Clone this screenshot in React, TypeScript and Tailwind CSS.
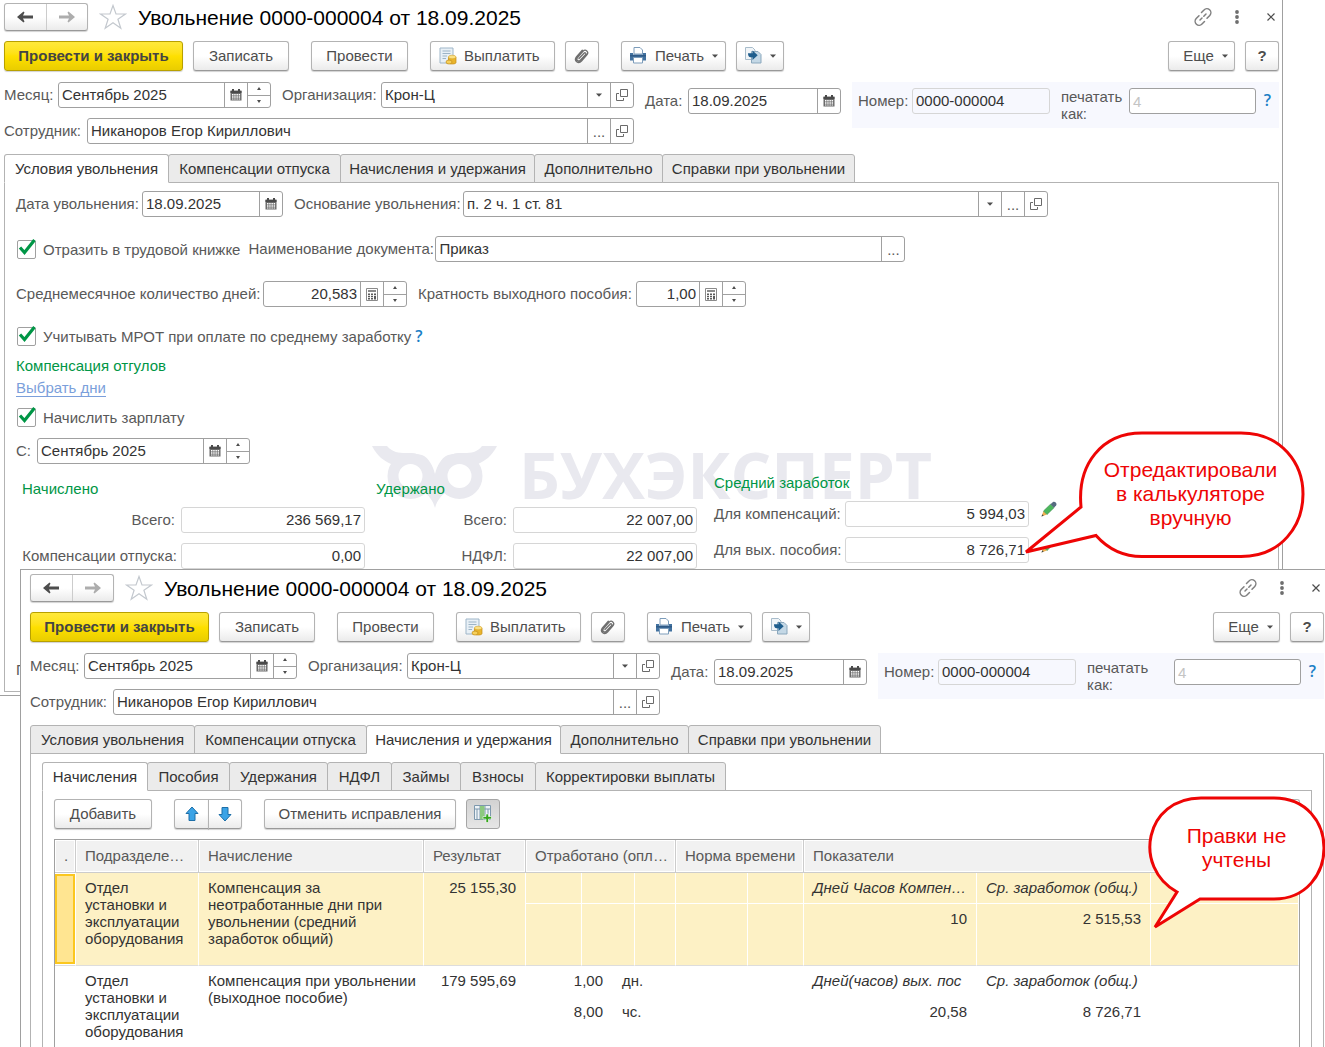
import React, { useId } from "react";
import clsx from "clsx";

type Tab = { title: string; width: string };

const MAIN_TABS: Tab[] = [
  { title: "Условия увольнения", width: "w-[165px]" },
  { title: "Компенсации отпуска", width: "w-[173px]" },
  { title: "Начисления и удержания", width: "w-[195px]" },
  { title: "Дополнительно", width: "w-[129px]" },
  { title: "Справки при увольнении", width: "w-[193px]" },
];

const INNER_TABS: Tab[] = [
  { title: "Начисления", width: "w-[106px]" },
  { title: "Пособия", width: "w-[83px]" },
  { title: "Удержания", width: "w-[99px]" },
  { title: "НДФЛ", width: "w-[65px]" },
  { title: "Займы", width: "w-[70px]" },
  { title: "Взносы", width: "w-[76px]" },
  { title: "Корректировки выплаты", width: "w-[191px]" },
];

/* ---------- icons ---------- */

const ArrowIcon = ({ className }: { className?: string }) => (
  <svg width="18" height="12" viewBox="0 0 18 12" className={className}>
    <path d="M1 6 7.5 .5 8.500 1.500 7 4.500H17V7.500H7L8.500 10.500 7.500 11.500Z" fill="currentColor" />
  </svg>
);

const StarIcon = () => (
  <svg width="28" height="26" viewBox="0 0 28 26" fill="none">
    <path
      d="M14 1.5 17 10H26.5L18.9 15.3 21.8 24.3 14 18.8 6.2 24.3 9.1 15.3 1.5 10H11Z"
      stroke="#c3c8ce"
      strokeWidth="1.2"
    />
  </svg>
);

const LinkIcon = () => (
  <svg width="20" height="20" viewBox="0 0 20 20" fill="none" stroke="#808080" strokeWidth="1.5" strokeLinecap="round">
    <path d="M8.5 5.5 11 3a3.9 3.9 0 0 1 5.8 5.4L14 11.3M11.5 14.5 9 17a3.9 3.9 0 0 1-5.8-5.4L6 8.7" />
    <path d="M7 13 9 11M10.8 9.2 13 7" />
  </svg>
);

const DotsIcon = () => (
  <svg width="6" height="14" viewBox="0 0 6 14" fill="#6e6e6e">
    <circle cx="3" cy="2" r="1.9" />
    <circle cx="3" cy="7" r="1.9" />
    <circle cx="3" cy="12" r="1.9" />
  </svg>
);

const CloseIcon = () => (
  <svg width="8" height="8" viewBox="0 0 8 8" stroke="#4d4d4d" strokeWidth="1.2">
    <path d="M.5 .5 7.5 7.5M7.5 .5 .5 7.5" />
  </svg>
);

const CalendarIcon = () => (
  <svg width="12" height="12" viewBox="0 0 12 12">
    <path d="M.5 1.500H11.500V11.500H.5Z" fill="#6a6a6a" />
    <path d="M2 0H4V3H2ZM8 0H10V3H8Z" fill="#4a4a4a" />
    <path d="M.5 2H11.500V4H.5Z" fill="#4a4a4a" />
    <path
      d="M2 5H3.500V6.500H2ZM4.200 5H5.700V6.500H4.200ZM6.400 5H7.900V6.500H6.400ZM8.600 5H10.100V6.500H8.600ZM2 7.200H3.500V8.700H2ZM4.200 7.200H5.700V8.700H4.200ZM6.400 7.200H7.900V8.700H6.400ZM8.600 7.200H10.100V8.700H8.600ZM2 9.400H3.500V10.600H2ZM4.200 9.400H5.700V10.600H4.200ZM6.400 9.400H7.900V10.600H6.400ZM8.600 9.400H10.100V10.600H8.600Z"
      fill="#fff"
    />
  </svg>
);

const CalcIcon = () => (
  <svg width="12" height="13" viewBox="0 0 12 13">
    <path d="M.5 .5H11.5V12.5H.5Z" fill="#fff" stroke="#8a8a8a" />
    <path d="M2 2H10V4H2Z" fill="#8a8a8a" />
    <path
      d="M2 5.5H4V7H2ZM5 5.5H7V7H5ZM8 5.5H10V7H8ZM2 7.8H4V9.2H2ZM5 7.8H7V9.2H5ZM2 10H4V11.5H2ZM5 10H7V11.5H5ZM8 7.8H10V11.5H8Z"
      fill="#5a5a5a"
    />
  </svg>
);

const OpenIcon = () => (
  <svg width="12" height="12" viewBox="0 0 12 12" fill="none" stroke="#6a6a6a">
    <path d="M4.5 .5H11.5V7.5H4.5Z" />
    <path d="M3 4.5H.5V11.5H7.5V9" />
  </svg>
);

const CaretIcon = () => (
  <svg width="6" height="4" viewBox="0 0 6 4" fill="#4d4d4d">
    <path d="M0 .5H6L3 3.8Z" />
  </svg>
);

const PayIcon = () => (
  <svg width="18" height="18" viewBox="0 0 18 18">
    <path d="M1 1H14V16H1Z" fill="#e8f0f6" stroke="#9fb6c9" />
    <path d="M3.5 4H11.5M3.5 6.5H11.5M3.5 9H8M3.5 11.500H7" stroke="#9db4c6" />
    <path d="M9.500 10V15.500C9.500 17.500 17 17.500 17 15.500V10Z" fill="#e9b42c" stroke="#c18a14" strokeWidth=".7" />
    <ellipse cx="13.200" cy="10" rx="3.800" ry="1.800" fill="#fbe083" stroke="#d6a42a" strokeWidth=".6" />
    <ellipse cx="10" cy="15" rx="3" ry="2" fill="#f6d05a" stroke="#c18a14" strokeWidth=".7" />
  </svg>
);

const ClipIcon = () => (
  <svg width="16" height="16" viewBox="0 0 16 16" fill="none" stroke="#6f6f6f" strokeWidth="1.3" strokeLinecap="round">
    <path d="M5 10.500 10 5.300c1.200-1.200 2.600.2 1.500 1.400L6.300 12.200c-2 2-4.700-.4-2.800-2.700L9 3.300c2.600-2.800 6.300.6 3.900 3.500L7.500 13C4.300 16.500-.4 12.600 2.400 9L8.300 2.300" />
  </svg>
);

const PrintIcon = () => (
  <svg width="18" height="17" viewBox="0 0 18 17">
    <path d="M5 .5H11L13.500 3V7H5Z" fill="#fff" stroke="#7c9cba" />
    <path d="M1 6H4V7.500H14V6H17V13.500H1Z" fill="#41719f" />
    <path d="M1 8H17V9.500H1Z" fill="#2f5a86" />
    <path d="M4.500 10.500H13.500V16H4.500Z" fill="#fff" stroke="#7c9cba" />
  </svg>
);

const CreateFromIcon = () => (
  <svg width="17" height="17" viewBox="0 0 17 17">
    <path d="M.5 .5H7.500L10 3V12.500H.5Z" fill="#f1f5f8" stroke="#a8bccb" />
    <path d="M6.500 4.500H13L16 7.500V16H6.500Z" fill="#c4d8e6" stroke="#8ba8bd" />
    <path d="M3 6.200H7.500V3.500L12.700 8.200 7.500 12.900V10.200H5.500C4 10.200 3 8.800 3 6.200Z" fill="#1f5e8d" />
  </svg>
);

const MoveIcon = ({ className }: { className?: string }) => (
  <svg width="14" height="16" viewBox="0 0 14 16" className={className}>
    <path d="M7 1 13 7.500H10V14.500H4V7.500H1Z" fill="#3ba3e6" stroke="#1d6fa8" strokeLinejoin="round" />
  </svg>
);

const ColumnsIcon = () => (
  <svg width="19" height="18" viewBox="0 0 19 18">
    <path d="M.5 .5H16.500V14.500H.5Z" fill="#eef3f7" stroke="#7d98ad" />
    <path d="M1 4H16M6 1V14M11 1V14M14 4V14M3 4V14" stroke="#7d98ad" />
    <path d="M6 1H10.500V14.500H6Z" fill="#8cc97f" />
    <path d="M12 9H14.500V11.500H17.500V14H14.500V17.500H12V14H9V11.500H12Z" fill="#35a51c" stroke="#fff" strokeWidth=".6" />
  </svg>
);

const PencilIcon = () => (
  <svg width="16" height="16" viewBox="0 0 16 16">
    <path d="M.5 15.500 2.500 10 6 13.500Z" fill="#f0b050" />
    <path d="M.5 15.500 1.300 13.300 2.700 14.700Z" fill="#3d4a4a" />
    <path d="M2.500 10 9.500 3.200 13 6.700 6 13.500Z" fill="#4cb85c" stroke="#35894a" strokeWidth=".6" />
    <path d="M9.500 3.200 12 1c1.500-1.200 4.400 1 3.200 3.200L13 6.700Z" fill="#566b80" />
  </svg>
);

/* ---------- controls ---------- */

type ButtonProps = {
  children?: React.ReactNode;
  className?: string;
  label?: string;
  primary?: boolean;
};

const Button = ({ children, className, label, primary }: ButtonProps) => (
  <button
    type="button"
    aria-label={label}
    className={clsx(
      "flex h-[30px] shrink-0 items-center rounded-[3px] border pb-px whitespace-nowrap shadow-[0_1px_1px_#0000002e]",
      primary
        ? "border-[#b8a000] bg-linear-to-b from-[#ffe93a] via-[#fee000] to-[#e9cd00] font-bold text-[#444]"
        : "border-[#b3b3b3] border-b-[#999] bg-linear-to-b from-white from-50% to-[#ebebeb] text-[#4d4d4d]",
      className
    )}
  >
    {children}
  </button>
);

const HelpLink = ({ className }: { className?: string }) => (
  <a href="#help" className={clsx("font-['Open_Sans',sans-serif] text-[16px] font-semibold text-[#1b7fc6]", className)}>
    ?
  </a>
);

type Addon = "calendar" | "calc" | "spin" | "drop" | "more" | "open";

const AddonButton = ({ kind }: { kind: Addon }) => {
  if (kind === "spin") {
    return (
      <div className="flex w-[23px] shrink-0 flex-col border-l border-[#a0a0a0]">
        <button type="button" aria-label="Больше" className="flex flex-1 items-center justify-center border-b border-[#a0a0a0]">
          <svg width="4" height="3" viewBox="0 0 4 3" fill="#4d4d4d">
            <path d="M0 3 2 0 4 3Z" />
          </svg>
        </button>
        <button type="button" aria-label="Меньше" className="flex flex-1 items-center justify-center">
          <svg width="4" height="3" viewBox="0 0 4 3" fill="#4d4d4d">
            <path d="M0 0 2 3 4 0Z" />
          </svg>
        </button>
      </div>
    );
  }

  return (
    <button type="button" aria-label={kind} className="flex w-[23px] shrink-0 items-center justify-center border-l border-[#a0a0a0]">
      {kind === "calendar" && <CalendarIcon />}
      {kind === "calc" && <CalcIcon />}
      {kind === "drop" && <CaretIcon />}
      {kind === "open" && <OpenIcon />}
      {kind === "more" && "..."}
    </button>
  );
};

type FieldProps = {
  label: string;
  value?: string;
  labelClass?: string;
  boxClass: string;
  addons?: Addon[];
  right?: boolean;
  readOnly?: boolean;
};

const Field = ({ label, value, labelClass, boxClass, addons = [], right, readOnly }: FieldProps) => {
  const id = useId();
  return (
    <div className="flex items-center">
      <label htmlFor={id} className={clsx("shrink-0 pb-px whitespace-nowrap", labelClass)}>
        {label}
      </label>
      <div
        className={clsx(
          "flex h-[26px] shrink-0 overflow-hidden rounded-[3px] border",
          readOnly ? "border-[#d6d6d6]" : "border-[#a0a0a0] bg-white",
          boxClass
        )}
      >
        <input
          id={id}
          defaultValue={value}
          readOnly={readOnly}
          className={clsx("w-0 flex-1 bg-transparent px-[3px] pb-px text-[#333] outline-none", right && "text-right")}
        />
        {addons.map((kind) => (
          <AddonButton kind={kind} key={kind} />
        ))}
      </div>
    </div>
  );
};

const Check = ({ label }: { label: string }) => (
  <label className="flex items-center gap-[6px] whitespace-nowrap">
    <span className="grid h-5 w-[21px] *:col-start-1 *:row-start-1">
      <input
        type="checkbox"
        defaultChecked
        className="h-[19px] w-[19px] appearance-none self-end justify-self-center rounded-[2px] border border-[#a0a0a0] bg-white"
      />
      <svg width="21" height="20" viewBox="0 0 21 20" fill="none" className="pointer-events-none">
        <path d="M4 8.500 8.500 13.500 18.500 1" stroke="#009646" strokeWidth="3.2" />
      </svg>
    </span>
    {label}
  </label>
);

const Tabs = ({ items, active }: { items: Tab[]; active: number }) => (
  <div role="tablist" className="flex">
    {items.map((item, i) => (
      <button
        type="button"
        role="tab"
        aria-selected={i === active}
        key={item.title}
        className={clsx(
          "-mr-px -mb-px flex h-[29px] justify-center rounded-t-[3px] border border-[#b3b3b3] pt-[5px] whitespace-nowrap text-[#333]",
          item.width,
          i === active ? "z-10 border-b-white bg-white" : "bg-[#ebebeb]"
        )}
      >
        {item.title}
      </button>
    ))}
  </div>
);

/* ---------- the part both windows share ---------- */

const DocumentHeader = () => {
  const printId = useId();
  return (
    <header className="flex flex-col gap-[10px]">
      <div className="flex h-7 items-center">
        <div className="flex h-7 w-[84px] rounded-[3px] border border-[#b3b3b3] border-b-[#999] bg-linear-to-b from-white from-50% to-[#ebebeb] shadow-[0_1px_1px_#0000002e]">
          <button type="button" aria-label="Назад" className="flex flex-1 items-center justify-center border-r border-[#ccc] text-[#4d4d4d]">
            <ArrowIcon />
          </button>
          <button type="button" aria-label="Вперед" className="flex flex-1 items-center justify-center text-[#adadad]">
            <ArrowIcon className="rotate-180" />
          </button>
        </div>
        <button type="button" aria-label="В избранное" className="ml-[11px]">
          <StarIcon />
        </button>
        <h1 className="ml-[11px] text-[21px] whitespace-nowrap text-black">Увольнение 0000-000004 от 18.09.2025</h1>
        <div className="ml-auto flex gap-[14px] *:flex *:w-5 *:items-center *:justify-center">
          <button type="button" aria-label="Ссылка">
            <LinkIcon />
          </button>
          <button type="button" aria-label="Меню">
            <DotsIcon />
          </button>
          <button type="button" aria-label="Закрыть" className="-mr-[2px]">
            <CloseIcon />
          </button>
        </div>
      </div>

      <div className="flex h-[31px]">
        <Button primary className="w-[179px] justify-center">Провести и закрыть</Button>
        <Button className="ml-[10px] w-24 justify-center">Записать</Button>
        <Button className="ml-[22px] w-[97px] justify-center">Провести</Button>
        <Button className="ml-[22px] w-[125px] gap-[7px] pl-2">
          <PayIcon />
          Выплатить
        </Button>
        <Button className="ml-[10px] w-[34px] justify-center" label="Файлы">
          <ClipIcon />
        </Button>
        <Button className="ml-[22px] w-[105px] gap-2 pl-[7px]">
          <PrintIcon />
          Печать
          <CaretIcon />
        </Button>
        <Button className="ml-[10px] w-12 gap-2 pl-2" label="Создать на основании">
          <CreateFromIcon />
          <CaretIcon />
        </Button>
        <Button className="ml-auto w-[67px] justify-center gap-2 pl-2">
          Еще
          <CaretIcon />
        </Button>
        <Button className="ml-[10px] w-[34px] justify-center font-bold" label="Справка">?</Button>
      </div>

      <div className="flex items-start">
        <div className="flex shrink-0 flex-col gap-[10px]">
          <div className="flex gap-[11px]">
            <Field label="Месяц:" value="Сентябрь 2025" labelClass="w-[54px]" boxClass="w-[213px]" addons={["calendar", "spin"]} />
            <Field label="Организация:" value="Крон-Ц" labelClass="w-[99px]" boxClass="w-[253px]" addons={["drop", "open"]} />
          </div>
          <Field label="Сотрудник:" value="Никаноров Егор Кириллович" labelClass="w-[83px]" boxClass="w-[547px]" addons={["more", "open"]} />
        </div>
        <div className="mt-[6px] ml-[11px]">
          <Field label="Дата:" value="18.09.2025" labelClass="w-[43px]" boxClass="w-[153px]" addons={["calendar"]} />
        </div>
        <div className="ml-[11px] flex h-[46px] flex-1 items-start bg-[#f7f8fe] pt-[6px] pl-[6px]">
          <Field label="Номер:" value="0000-000004" labelClass="w-[54px]" boxClass="w-[138px]" readOnly />
          <label htmlFor={printId} className="ml-[11px] flex-1 leading-[17px]">
            печатать
            <br />
            как:
          </label>
          <input
            id={printId}
            placeholder="4"
            className="h-[26px] w-[127px] rounded-[3px] border border-[#a0a0a0] bg-white px-[3px] text-[#333] placeholder:text-[#c4c4c4]"
          />
          <HelpLink className="w-[23px] text-center leading-6" />
        </div>
      </div>
    </header>
  );
};

const Watermark = () => (
  <div className="pointer-events-none absolute top-[438px] left-[372px] -z-10 flex items-start gap-[22px] text-[#e9e9ef]">
    <svg width="125" height="72" viewBox="0 0 125 72" fill="currentColor">
      <path d="M0 8H15C22 16 30 15 39 15L50 17C57 20 61 28 63 36 65 28 69 20 76 17L87 15C96 15 104 16 110 8H125C120 18 113 23 106 26L87 21 63 45 39 21 19 26C12 23 5 18 0 8Z" />
      <path d="M63 38 74 54C70 57 65 62 63 70 61 62 56 57 52 54Z" />
      <g fill="#fff" stroke="currentColor" strokeWidth="11">
        <circle cx="38.500" cy="38" r="17.500" />
        <circle cx="87.500" cy="38" r="17.500" />
      </g>
    </svg>
    <span className="font-['Open_Sans',sans-serif] text-[64px] leading-[74px] font-bold">БУХЭКСПЕРТ</span>
  </div>
);

const GroupTitle = ({ children }: { children: React.ReactNode }) => (
  <h2 className="h-[17px] text-[#009646]">{children}</h2>
);

const TermsWindow = () => (
  <section className="relative isolate col-start-1 row-start-1 mr-[42px] self-start border-r border-b border-[#a0a0a0] bg-white pt-[3px] pr-[3px] pb-[3px] pl-1">
    <Watermark />
    <DocumentHeader />
    <div className="mt-[10px]">
      <Tabs items={MAIN_TABS} active={0} />
      <div className="border border-[#b3b3b3] px-[11px] pt-2 pb-[13px]">
        <div className="flex gap-[11px]">
          <Field label="Дата увольнения:" value="18.09.2025" labelClass="w-[126px]" boxClass="w-[141px]" addons={["calendar"]} />
          <Field label="Основание увольнения:" value="п. 2 ч. 1 ст. 81" labelClass="w-[169px]" boxClass="w-[585px]" addons={["drop", "more", "open"]} />
        </div>
        <div className="mt-[19px] flex gap-2">
          <Check label="Отразить в трудовой книжке" />
          <Field label="Наименование документа:" value="Приказ" labelClass="w-[187px]" boxClass="w-[470px]" addons={["more"]} />
        </div>
        <div className="mt-[19px] flex gap-[11px]">
          <Field label="Среднемесячное количество дней:" value="20,583" labelClass="w-[247px]" boxClass="w-[144px]" addons={["calc", "spin"]} right />
          <Field label="Кратность выходного пособия:" value="1,00" labelClass="w-[218px]" boxClass="w-[110px]" addons={["calc", "spin"]} right />
        </div>
        <div className="mt-[19px] flex h-5 items-center gap-1">
          <Check label="Учитывать МРОТ при оплате по среднему заработку" />
          <HelpLink />
        </div>
        <div className="mt-[11px]">
          <GroupTitle>Компенсация отгулов</GroupTitle>
        </div>
        <a href="#days" className="mt-[5px] block w-fit border-b border-[#7b9fdb] leading-[17px] text-[#7b9fdb]">Выбрать дни</a>
        <div className="mt-[10px]">
          <Check label="Начислить зарплату" />
        </div>
        <div className="mt-[11px]">
          <Field label="С:" value="Сентябрь 2025" labelClass="w-[21px]" boxClass="w-[213px]" addons={["calendar", "spin"]} />
        </div>
        <div className="mt-[10px] flex items-start">
          <div className="flex flex-col gap-[10px] pt-[6px] pl-[6px]">
            <GroupTitle>Начислено</GroupTitle>
            <Field label="Всего:" value="236 569,17" labelClass="w-[159px] pr-[6px] text-right" boxClass="w-[184px]" right readOnly />
            <Field label="Компенсации отпуска:" value="0,00" labelClass="w-[159px] pr-1 text-right" boxClass="w-[184px]" right readOnly />
          </div>
          <div className="ml-[11px] flex flex-col gap-[10px] pt-[6px]">
            <GroupTitle>Удержано</GroupTitle>
            <Field label="Всего:" value="22 007,00" labelClass="w-[137px] pr-[6px] text-right" boxClass="w-[184px]" right readOnly />
            <Field label="НДФЛ:" value="22 007,00" labelClass="w-[137px] pr-[6px] text-right" boxClass="w-[184px]" right readOnly />
          </div>
          <div className="ml-[17px] flex flex-col gap-[10px]">
            <GroupTitle>Средний заработок</GroupTitle>
            <div className="flex items-start gap-3">
              <Field label="Для компенсаций:" value="5 994,03" labelClass="w-[131px]" boxClass="w-[184px]" right readOnly />
              <button type="button" aria-label="Изменить">
                <PencilIcon />
              </button>
            </div>
            <div className="flex items-start gap-3">
              <Field label="Для вых. пособия:" value="8 726,71" labelClass="w-[131px]" boxClass="w-[184px]" right readOnly />
              <button type="button" aria-label="Изменить">
                <PencilIcon />
              </button>
            </div>
          </div>
        </div>
        <p className="mt-[92px] leading-[17px]">П</p>
      </div>
    </div>
  </section>
);

/* ---------- accruals table ---------- */

const TH = ({ children, span }: { children?: React.ReactNode; span?: number }) => (
  <th
    colSpan={span}
    className="h-[33px] border-r border-b border-[#ccc] bg-[#f1f1f1] pb-[2px] pl-[9px] text-left font-normal whitespace-nowrap text-[#595959] shadow-[inset_0_0_0_1px_#fff]"
  >
    {children}
  </th>
);

type CellProps = {
  children?: React.ReactNode;
  span?: number;
  rows?: number;
  className?: string;
  last?: boolean;
};

const TD = ({ children, span, rows, className, last }: CellProps) => (
  <td
    colSpan={span}
    rowSpan={rows}
    className={clsx("border-r border-b border-r-white pt-[6px] pr-[9px] pl-[9px] align-top", last ? "border-b-[#ddd]" : "border-b-white", className)}
  >
    {children}
  </td>
);

const AccrualsTable = () => (
  <table className="w-full table-fixed border-separate border-spacing-0 leading-[17px] text-[#333]">
    <colgroup>
      <col className="w-[21px]" />
      <col className="w-[123px]" />
      <col className="w-[225px]" />
      <col className="w-[102px]" />
      <col className="w-[56px]" />
      <col className="w-[31px]" />
      <col className="w-[22px]" />
      <col className="w-[41px]" />
      <col className="w-[72px]" />
      <col className="w-[56px]" />
      <col className="w-[173px]" />
      <col className="w-[174px]" />
      <col />
    </colgroup>
    <thead>
      <tr>
        <TH>.</TH>
        <TH>Подразделе…</TH>
        <TH>Начисление</TH>
        <TH>Результат</TH>
        <TH span={4}>Отработано (опл…</TH>
        <TH span={2}>Норма времени</TH>
        <TH span={3}>Показатели</TH>
      </tr>
    </thead>
    <tbody>
      <tr className="h-[31px] bg-[#fdf1c5]">
        <td rowSpan={2} className="border-r border-b border-r-white border-b-[#ddd] bg-white p-0 pt-px pb-px">
          <div className="h-[90px] border-2 border-[#fbc71f] bg-[#ffe591]" />
        </td>
        <TD rows={2} last>Отдел установки и эксплуатации оборудования</TD>
        <TD rows={2} last>Компенсация за неотработанные дни при увольнении (средний заработок общий)</TD>
        <TD rows={2} last className="text-right">25 155,30</TD>
        <TD />
        <TD span={2} />
        <TD />
        <TD />
        <TD />
        <TD className="whitespace-nowrap italic">Дней Часов Компен…</TD>
        <TD className="whitespace-nowrap italic">Ср. заработок (общ.)</TD>
        <TD />
      </tr>
      <tr className="h-[62px] bg-[#fdf1c5]">
        <TD last />
        <TD last span={2} />
        <TD last />
        <TD last />
        <TD last />
        <TD last className="text-right">10</TD>
        <TD last className="text-right">2 515,53</TD>
        <TD last />
      </tr>
      <tr className="h-[31px]">
        <TD rows={2} />
        <TD rows={2}>Отдел установки и эксплуатации оборудования</TD>
        <TD rows={2} className="whitespace-nowrap">
          Компенсация при увольнении
          <br />
          (выходное пособие)
        </TD>
        <TD rows={2} className="text-right">179 595,69</TD>
        <TD span={2} className="text-right">1,00</TD>
        <TD span={2}>дн.</TD>
        <TD span={2} />
        <TD className="whitespace-nowrap italic">Дней(часов) вых. пос</TD>
        <TD className="whitespace-nowrap italic">Ср. заработок (общ.)</TD>
        <TD />
      </tr>
      <tr>
        <TD span={2} className="text-right">8,00</TD>
        <TD span={2}>чс.</TD>
        <TD span={2} />
        <TD className="text-right">20,58</TD>
        <TD className="text-right">8 726,71</TD>
        <TD />
      </tr>
    </tbody>
  </table>
);

const AccrualsWindow = () => (
  <section className="relative col-start-1 row-start-1 mt-[569px] ml-5 flex flex-col border-t border-l border-[#a0a0a0] bg-white pt-1 pr-px pl-[9px]">
    <DocumentHeader />
    <div className="mt-[10px] flex flex-1 flex-col">
      <Tabs items={MAIN_TABS} active={2} />
      <div className="flex flex-1 flex-col border border-b-0 border-[#b3b3b3] px-[11px] pt-2">
        <Tabs items={INNER_TABS} active={0} />
        <div className="flex flex-1 flex-col border border-b-0 border-[#b3b3b3] px-[11px] pt-2">
          <div className="flex">
            <Button className="w-[98px] justify-center">Добавить</Button>
            <div className="ml-[22px] flex">
              <Button className="w-[35px] justify-center rounded-r-none" label="Вверх">
                <MoveIcon />
              </Button>
              <Button className="-ml-px w-[34px] justify-center rounded-l-none" label="Вниз">
                <MoveIcon className="rotate-180" />
              </Button>
            </div>
            <Button className="ml-[22px] w-48 justify-center">Отменить исправления</Button>
            <button
              type="button"
              aria-label="Показатели"
              className="ml-[10px] flex h-[30px] w-[34px] items-center justify-center rounded-[3px] border border-[#a6a6a6] bg-linear-to-b from-[#d2d2d2] to-[#e6e6e6]"
            >
              <ColumnsIcon />
            </button>
            <Button className="ml-auto w-[67px]" label="Еще" />
          </div>
          <div className="mt-[10px] flex-1 border border-b-0 border-[#a0a0a0]">
            <AccrualsTable />
          </div>
        </div>
      </div>
    </div>
  </section>
);

/* ---------- notes over the windows ---------- */

const EditedNote = () => (
  <div className="absolute top-[430px] left-[1022px] h-[130px] w-[284px]">
    <svg width="284" height="130" viewBox="0 0 284 130" className="absolute inset-0">
      <path
        d="M59 77C55 34 80 3 120 3H219C260 3 281 34 281 64 281 95 260 126.500 219 126.500H120C101 126.500 86 119 74 105.500L4 122Z"
        fill="#fff"
        stroke="#ee0505"
        strokeWidth="3"
      />
    </svg>
    <p className="relative pt-7 pl-[53px] text-center text-[21px] leading-6 text-[#ee0505]">
      Отредактировали
      <br />в калькуляторе
      <br />
      вручную
    </p>
  </div>
);

const IgnoredNote = () => (
  <div className="absolute top-[795px] left-[1148px] h-[136px] w-[177px]">
    <svg width="177" height="136" viewBox="0 0 177 136" className="absolute inset-0">
      <path
        d="M29 97C-16 72 -3 3 53 3H126C159 3 176 28 176 53 176 78 159 104 126 104H52L7 132Z"
        fill="#fff"
        stroke="#ee0505"
        strokeWidth="3"
      />
    </svg>
    <p className="relative pt-[29px] text-center text-[21px] leading-6 text-[#ee0505]">
      Правки не
      <br />
      учтены
    </p>
  </div>
);

const App = () => {
  return (
    <main className="relative grid min-h-screen overflow-hidden bg-white font-['Liberation_Sans',Arial,sans-serif] text-[15px] leading-[17px] text-[#595959]">
      <TermsWindow />
      <AccrualsWindow />
      <EditedNote />
      <IgnoredNote />
    </main>
  );
};

export default App;
